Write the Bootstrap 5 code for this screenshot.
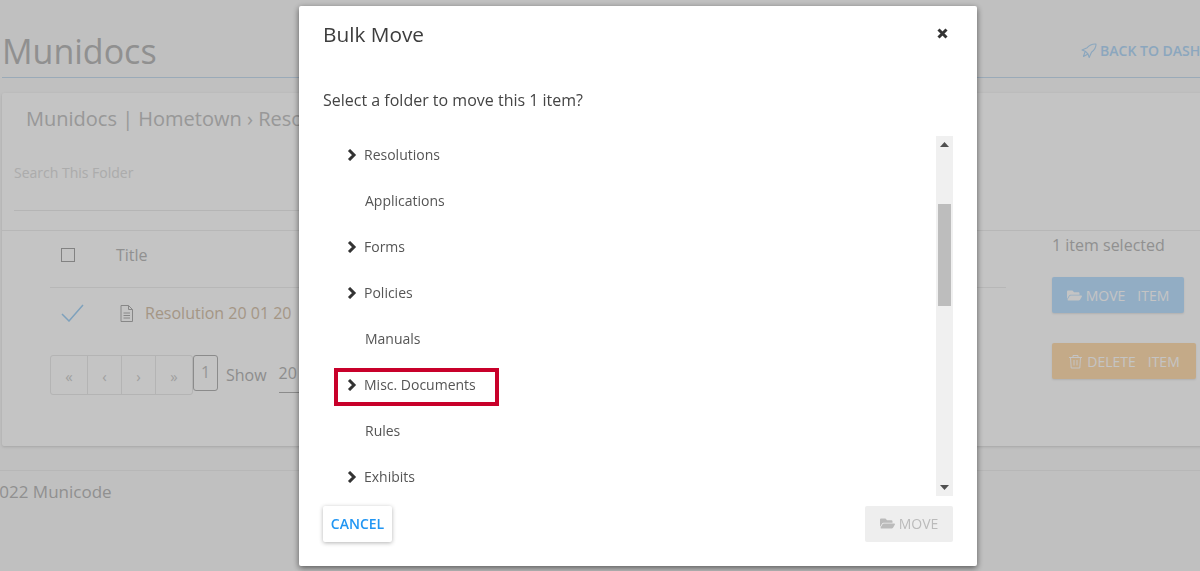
<!DOCTYPE html>
<html lang="en">
<head>
<meta charset="utf-8">
<title>Bulk Move</title>
<link href="https://cdn.jsdelivr.net/npm/bootstrap@5.3.0/dist/css/bootstrap.min.css" rel="stylesheet">
<style>
html,body{height:571px;overflow:hidden}
body{font-family:"Open Sans","Liberation Sans",sans-serif;background:#fafafa;color:#6b6b6b}
.shell{width:1330px}
.pagehead{margin-left:2px;height:78px;border-bottom:1px solid #c9ddf0;padding-right:81px}
.pagehead h1{font-size:34px;font-weight:400;margin:0;line-height:44px;padding-top:29px;color:#bcbcbc}
.backlink{font-size:14px;font-weight:600;color:#b5d9f7;padding-top:41px;line-height:19px;margin-left:auto;white-space:nowrap}
.backlink svg{width:16px;height:16px;vertical-align:-3px;margin-right:3px}
.sheet{margin:15px 0 0 2px;height:353px;background:#fff;box-shadow:0 1px 3px rgba(0,0,0,.14);border-radius:2px}
.crumb{font-size:20px;line-height:27px;padding:12px 0 0 24px;color:#c6c6c6;white-space:nowrap}
.searchbox{margin:25px 0 0 12px;width:920px;height:54px;padding-top:6px;border-bottom:1px solid #ececec;font-size:14px;line-height:20px;color:#e0e0e0}
.lower{margin-top:19px;border-top:1px solid #eee}
.tablewrap{width:1050px;padding-left:48px}
.headrow{height:57px;padding-bottom:9px;border-bottom:1px solid #eee;margin-right:46px;font-size:16px;color:#bcbcbc}
.cbx{width:14px;height:14px;border:1px solid #aaa;margin:0 41px 0 11px;flex:none}
.itemrow{height:50px;font-size:16px;color:#d6c4ae}
.tick{width:24px;height:18px;margin:0 34px 0 11px;flex:none}
.fileic{width:15px;height:17px;margin-right:11px;flex:none}
.pagerrow{margin-top:17px;color:#b8b8b8}
.pagerrow .pagination{margin:0;--bs-pagination-border-color:#eaeaea;--bs-pagination-color:#d0d0d0;--bs-pagination-bg:transparent;--bs-pagination-border-radius:3px}
.pagerrow .page-link{height:40px;width:35px;padding:9px 0 0;text-align:center;font-size:15px;line-height:22px}
.pagerrow .page-item:first-child .page-link{width:38px}
.pagerrow .page-item:last-child .page-link{width:38px}
.onepage{width:25px;height:36px;border:1px solid #b5b5b5;border-radius:3px;text-align:center;font-size:16px;line-height:32px;color:#c4c4c4;margin-right:8px}
.showtxt{font-size:16px;line-height:40px;margin-right:12px}
.sizepick{width:120px;height:38px;border-bottom:1px solid #b5b5b5;font-size:16px;line-height:36px}
.sidecol{padding-top:2px}
.sidecol p{font-size:16px;line-height:24px;margin:0 0 20px;color:#bcbcbc}
.actbtn{display:flex;align-items:center;height:36px;border:0;border-radius:2px;color:#fff;font-size:14px;padding:0;box-shadow:0 1px 2px rgba(0,0,0,.1);justify-content:center}
.actbtn svg{width:15px;height:15px;margin-right:4px;fill:currentColor}
.actmove{width:132px;background:#bfe2ff;margin-bottom:30px}
.actdel{width:144px;background:#ffdeb1}
.actbtn span{margin-left:12px}
.foot{margin-top:24px;border-top:1px solid #eee;font-size:17px;line-height:22px;padding-top:10px;margin-left:-29px;color:#bcbcbc}
.modal-backdrop.dimmer{--bs-backdrop-opacity:.23;--bs-backdrop-zindex:1050}
.bulkdialog{width:678px;max-width:678px;margin:6px 0 0 299px}
.bulkdialog .modal-content{height:560px;border:0;border-radius:2px;box-shadow:0 2px 6px rgba(0,0,0,.55);--bs-modal-bg:#fff;color:#444}
.bulkdialog .modal-header{height:56px;padding:0 24px 1px;border:0}
.bulkdialog .modal-title{font-size:20.8px;font-weight:500;line-height:28px;color:#3d3d3d}
.xbtn{background:none;border:0;padding:0;width:11px;height:11px;margin-right:5px;display:flex}
.bulkdialog .modal-body{padding:27px 24px 0;flex:none}
.prompt{font-size:16px;line-height:22px;margin:0 0 25px;color:#444}
.treewrap{height:360px}
.treelist{flex:1;overflow:hidden;min-width:0}
.treeinner{margin-top:-5px}
.treeinner .list-group-item{height:46px;padding:0 0 0 42px;border:0;background:none;display:flex;align-items:center;font-size:14px;color:#555;border-radius:0;position:relative}
.treeinner .list-group-item.branch{padding-left:24px}
.chev{width:10px;height:12px;margin:2px 7px 0 0;flex:none}
.redmark{position:absolute;left:11px;top:7px;width:165px;height:38px;border:4px solid #c8002a}
.fakebar{width:17px;background:#f0f0f0;flex:none}
.arrowcell{height:17px;flex:none;display:flex;align-items:center;justify-content:center}
.arrowcell svg{width:9px;height:5px}
.gutter1{height:51px}
.barthumb{height:102px;margin:0 2px;background:#bdbdbd;flex:none}
.bulkdialog .modal-footer{padding:10px 24px 24px;border:0;justify-content:space-between;flex-wrap:nowrap}
.bulkdialog .modal-footer>*{margin:0}
.cancelbtn{width:69px;height:36px;padding:0 0 2px;border:0;background:#fff;border-radius:2px;color:#2196f3;font-size:14px;font-weight:600;box-shadow:0 1px 4px rgba(0,0,0,.3)}
.movebtn{width:88px;height:36px;padding:0 0 1px;border:0;border-radius:2px;background:#eee;color:#bbb;font-size:14px;display:flex;align-items:center;justify-content:center}
.movebtn svg{width:15px;height:15px;fill:currentColor;margin-right:4px}
</style>
</head>
<body>
<div class="shell">
  <header class="pagehead d-flex">
    <h1>Munidocs</h1>
    <a class="backlink text-decoration-none">
      <svg viewBox="0 0 16 16" fill="none" stroke="#b5d9f7" stroke-width="1.100" stroke-linejoin="round"><path d="M15 1c-3.800-.2-6.700 1-8.800 3.700L1 7l3.200 1.200L7 11l1.200 3.500 2.300-5.300C13.400 7 15.200 4.400 15 1zM4.200 8.200L2.500 13.500 7 11"/></svg>BACK TO DASHBOARD
    </a>
  </header>
  <section class="sheet">
    <div class="crumb">Munidocs | Hometown › Resolutions</div>
    <div class="searchbox">Search This Folder</div>
    <div class="lower d-flex">
      <div class="tablewrap flex-none">
        <div class="headrow d-flex align-items-center"><span class="cbx"></span><span>Title</span></div>
        <div class="itemrow d-flex align-items-center">
          <svg class="tick" viewBox="0 0 24 18" fill="none" stroke="#a5d2f5" stroke-width="1.500"><path d="M1 10l7 7L22 1"/></svg>
          <svg class="fileic" viewBox="0 0 15 17" fill="none" stroke="#b0b0b0"><path d="M2 .5h7.500l4 4v12h-11.500zM9.500 .5v4h4M4.500 8h6.500M4.500 10.500h6.500M4.500 13h6.500"/></svg>
          <span>Resolution 20 01 20</span>
        </div>
        <div class="pagerrow d-flex align-items-start">
          <ul class="pagination">
            <li class="page-item"><a class="page-link">«</a></li>
            <li class="page-item"><a class="page-link">‹</a></li>
            <li class="page-item"><a class="page-link">›</a></li>
            <li class="page-item"><a class="page-link">»</a></li>
          </ul>
          <div class="onepage">1</div>
          <span class="showtxt">Show</span>
          <div class="sizepick">20</div>
        </div>
      </div>
      <aside class="sidecol">
        <p>1 item selected</p>
        <button class="actbtn actmove" type="button"><svg viewBox="0 0 576 512"><path d="M572.694 292.093L500.27 416.248A63.997 63.997 0 0 1 444.989 448H45.025c-18.523 0-30.064-20.093-20.731-36.093l72.424-124.155A64 64 0 0 1 152 256h399.964c18.523 0 30.064 20.093 20.73 36.093zM152 224h328v-48c0-26.51-21.49-48-48-48H272l-64-64H48C21.49 64 0 85.49 0 112v278.046l69.077-118.418C86.214 242.25 117.989 224 152 224z"/></svg>MOVE<span>ITEM</span></button>
        <button class="actbtn actdel" type="button"><svg viewBox="0 0 15 15" style="fill:none" stroke="currentColor"><path d="M1 3.500h13M5 3.500V1.500h5v2M2.500 3.500l.7 10.500h8.600l.7-10.500M6 6v5.500M9 6v5.500"/></svg>DELETE<span>ITEM</span></button>
      </aside>
    </div>
  </section>
  <footer class="foot">© 2022 Municode</footer>
</div>

<div class="modal-backdrop dimmer show"></div>
<div class="modal d-block" tabindex="-1">
  <div class="modal-dialog bulkdialog">
    <div class="modal-content">
      <div class="modal-header">
        <h5 class="modal-title">Bulk Move</h5>
        <button class="xbtn ms-auto" type="button" aria-label="Close"><svg viewBox="0 0 11 11" width="11" height="11" stroke="#333" stroke-width="3"><path d="M1.500 1.500l8 8M9.500 1.500l-8 8"/></svg></button>
      </div>
      <div class="modal-body">
        <p class="prompt">Select a folder to move this 1 item?</p>
        <div class="treewrap d-flex">
          <div class="treelist">
            <ul class="list-group treeinner">
              <li class="list-group-item branch"><svg class="chev" viewBox="0 0 10 12" fill="none" stroke="#333" stroke-width="3"><path d="M2 1l5 5-5 5"/></svg>Resolutions</li>
              <li class="list-group-item">Applications</li>
              <li class="list-group-item branch"><svg class="chev" viewBox="0 0 10 12" fill="none" stroke="#333" stroke-width="3"><path d="M2 1l5 5-5 5"/></svg>Forms</li>
              <li class="list-group-item branch"><svg class="chev" viewBox="0 0 10 12" fill="none" stroke="#333" stroke-width="3"><path d="M2 1l5 5-5 5"/></svg>Policies</li>
              <li class="list-group-item">Manuals</li>
              <li class="list-group-item branch"><svg class="chev" viewBox="0 0 10 12" fill="none" stroke="#333" stroke-width="3"><path d="M2 1l5 5-5 5"/></svg>Misc. Documents<span class="redmark"></span></li>
              <li class="list-group-item">Rules</li>
              <li class="list-group-item branch"><svg class="chev" viewBox="0 0 10 12" fill="none" stroke="#333" stroke-width="3"><path d="M2 1l5 5-5 5"/></svg>Exhibits</li>
            </ul>
          </div>
          <div class="fakebar d-flex flex-column">
            <div class="arrowcell"><svg viewBox="0 0 9 5"><path d="M4.500 0L9 5H0z" fill="#505050"/></svg></div>
            <div class="gutter1"></div>
            <div class="barthumb"></div>
            <div class="flex-grow-1"></div>
            <div class="arrowcell"><svg viewBox="0 0 9 5"><path d="M0 0h9L4.500 5z" fill="#505050"/></svg></div>
          </div>
        </div>
      </div>
      <div class="modal-footer">
        <button class="cancelbtn" type="button">CANCEL</button>
        <button class="movebtn" type="button"><svg viewBox="0 0 576 512"><path d="M572.694 292.093L500.27 416.248A63.997 63.997 0 0 1 444.989 448H45.025c-18.523 0-30.064-20.093-20.731-36.093l72.424-124.155A64 64 0 0 1 152 256h399.964c18.523 0 30.064 20.093 20.73 36.093zM152 224h328v-48c0-26.51-21.49-48-48-48H272l-64-64H48C21.49 64 0 85.49 0 112v278.046l69.077-118.418C86.214 242.25 117.989 224 152 224z"/></svg>MOVE</button>
      </div>
    </div>
  </div>
</div>
<script src="https://cdn.jsdelivr.net/npm/bootstrap@5.3.0/dist/js/bootstrap.bundle.min.js"></script>
</body>
</html>
